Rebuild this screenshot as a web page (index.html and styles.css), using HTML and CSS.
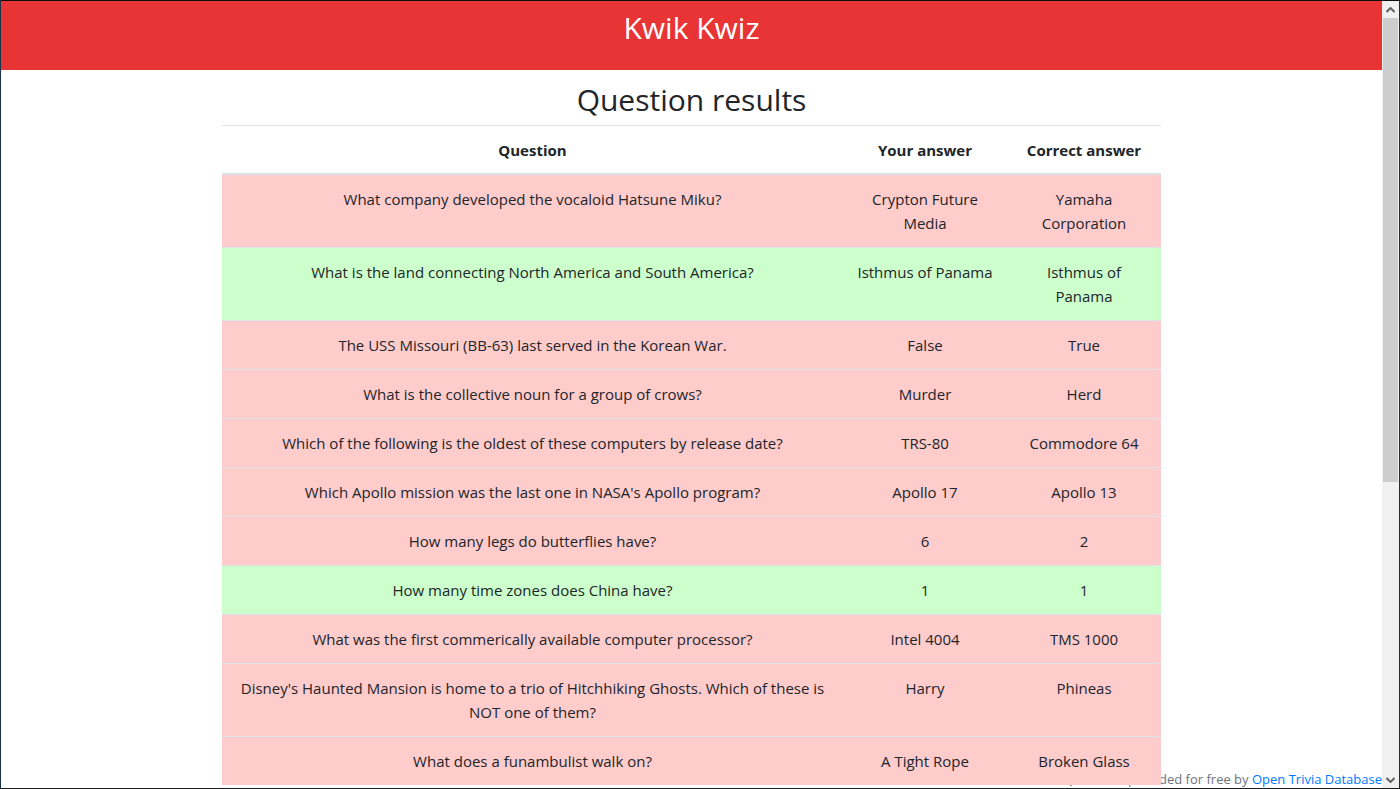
FILE: index.html
```html
<!DOCTYPE html>
<html lang="en">
<head>
<meta charset="utf-8">
<title>Kwik Kwiz</title>
<link rel="stylesheet" href="styles.css">
</head>
<body>
<div class="window">
  <div class="viewport">
    <header class="topbar"><h1 class="brand">Kwik Kwiz</h1></header>
    <main class="content">
      <h2 class="page-title">Question results</h2>
      <table class="results">
        <colgroup>
          <col class="col-q"><col class="col-a"><col class="col-c">
        </colgroup>
        <thead>
          <tr><th>Question</th><th>Your answer</th><th>Correct answer</th></tr>
        </thead>
        <tbody>
          <tr class="wrong"><td>What company developed the vocaloid Hatsune Miku?</td><td>Crypton Future Media</td><td>Yamaha Corporation</td></tr>
          <tr class="right"><td>What is the land connecting North America and South America?</td><td>Isthmus of Panama</td><td>Isthmus of Panama</td></tr>
          <tr class="wrong"><td>The USS Missouri (BB-63) last served in the Korean War.</td><td>False</td><td>True</td></tr>
          <tr class="wrong"><td>What is the collective noun for a group of crows?</td><td>Murder</td><td>Herd</td></tr>
          <tr class="wrong"><td>Which of the following is the oldest of these computers by release date?</td><td>TRS-80</td><td>Commodore 64</td></tr>
          <tr class="wrong"><td>Which Apollo mission was the last one in NASA's Apollo program?</td><td>Apollo 17</td><td>Apollo 13</td></tr>
          <tr class="wrong"><td>How many legs do butterflies have?</td><td>6</td><td>2</td></tr>
          <tr class="right"><td>How many time zones does China have?</td><td>1</td><td>1</td></tr>
          <tr class="wrong"><td>What was the first commerically available computer processor?</td><td>Intel 4004</td><td>TMS 1000</td></tr>
          <tr class="wrong"><td>Disney's Haunted Mansion is home to a trio of Hitchhiking Ghosts. Which of these is NOT one of them?</td><td>Harry</td><td>Phineas</td></tr>
          <tr class="wrong"><td>What does a funambulist walk on?</td><td>A Tight Rope</td><td>Broken Glass</td></tr>
        </tbody>
      </table>
    </main>
    <footer class="credit">Questions provided for free by <a href="#">Open Trivia Database</a></footer>
  </div>
  <div class="scrollbar">
    <div class="sb-btn sb-up"><svg width="9" height="6" viewBox="0 0 9 6"><path d="M0.5 5 L4.5 1 L8.5 5" fill="none" stroke="#606060" stroke-width="2"/></svg></div>
    <div class="sb-track"><div class="sb-thumb"></div></div>
    <div class="sb-btn sb-down"><svg width="9" height="6" viewBox="0 0 9 6"><path d="M0.5 1 L4.5 5 L8.5 1" fill="none" stroke="#606060" stroke-width="2"/></svg></div>
  </div>
</div>
</body>
</html>
```

FILE: styles.css
```css
* { box-sizing: border-box; }
html, body { margin: 0; padding: 0; }
body {
  width: 1400px;
  height: 789px;
  overflow: hidden;
  background: #1a2a36;
  font-family: "Open Sans", "Noto Sans", sans-serif;
  color: #212529;
}
.window {
  display: flex;
  width: 1400px;
  height: 789px;
  border-top: 1px solid #0d0d0d;
  border-left: 1px solid #1b3346;
  border-right: 1px solid #2a2a2a;
  border-bottom: 1px solid #1e1e1e;
}
.viewport {
  position: relative;
  flex: 1;
  background: #fff;
  overflow: hidden;
}
.topbar {
  height: 69px;
  background: #e83434;
  display: flex;
  justify-content: center;
  padding-top: 7px;
}
.brand {
  margin: 0;
  color: #fff;
  font-weight: 400;
  font-size: 30px;
  line-height: 40px;
}
.content {
  width: 939px;
  margin: 0 auto;
  position: relative;
  z-index: 1;
}
.page-title {
  margin: 11px 0 6px;
  text-align: center;
  font-weight: 400;
  font-size: 30px;
  line-height: 38px;
}
.results {
  width: 939px;
  border-collapse: collapse;
  table-layout: fixed;
  font-size: 15px;
  line-height: 24px;
  text-align: center;
}
.col-q { width: 621px; }
.col-a { width: 164px; }
.col-c { width: 154px; }
.results th, .results td {
  padding: 12px;
  border-top: 1px solid #dee2e6;
  vertical-align: top;
}
.results th {
  font-weight: 700;
  padding-bottom: 11px;
  border-bottom: 2px solid #dee2e6;
  background: #fff;
}
.results tr.wrong td { background: #ffcccc; }
.results tr.right td { background: #ccffcc; }
.credit {
  position: absolute;
  right: 0;
  bottom: 0;
  font-size: 13px;
  line-height: 18px;
  color: #6c757d;
  white-space: nowrap;
}
.credit a { color: #007bff; text-decoration: none; }
.scrollbar {
  width: 17px;
  display: flex;
  flex-direction: column;
  background: #f0f0f0;
}
.sb-btn {
  height: 17px;
  display: flex;
  align-items: center;
  justify-content: center;
}
.sb-track {
  flex: 1;
  padding: 0 1px;
}
.sb-thumb {
  height: 464px;
  background: #cdcdcd;
}
```
